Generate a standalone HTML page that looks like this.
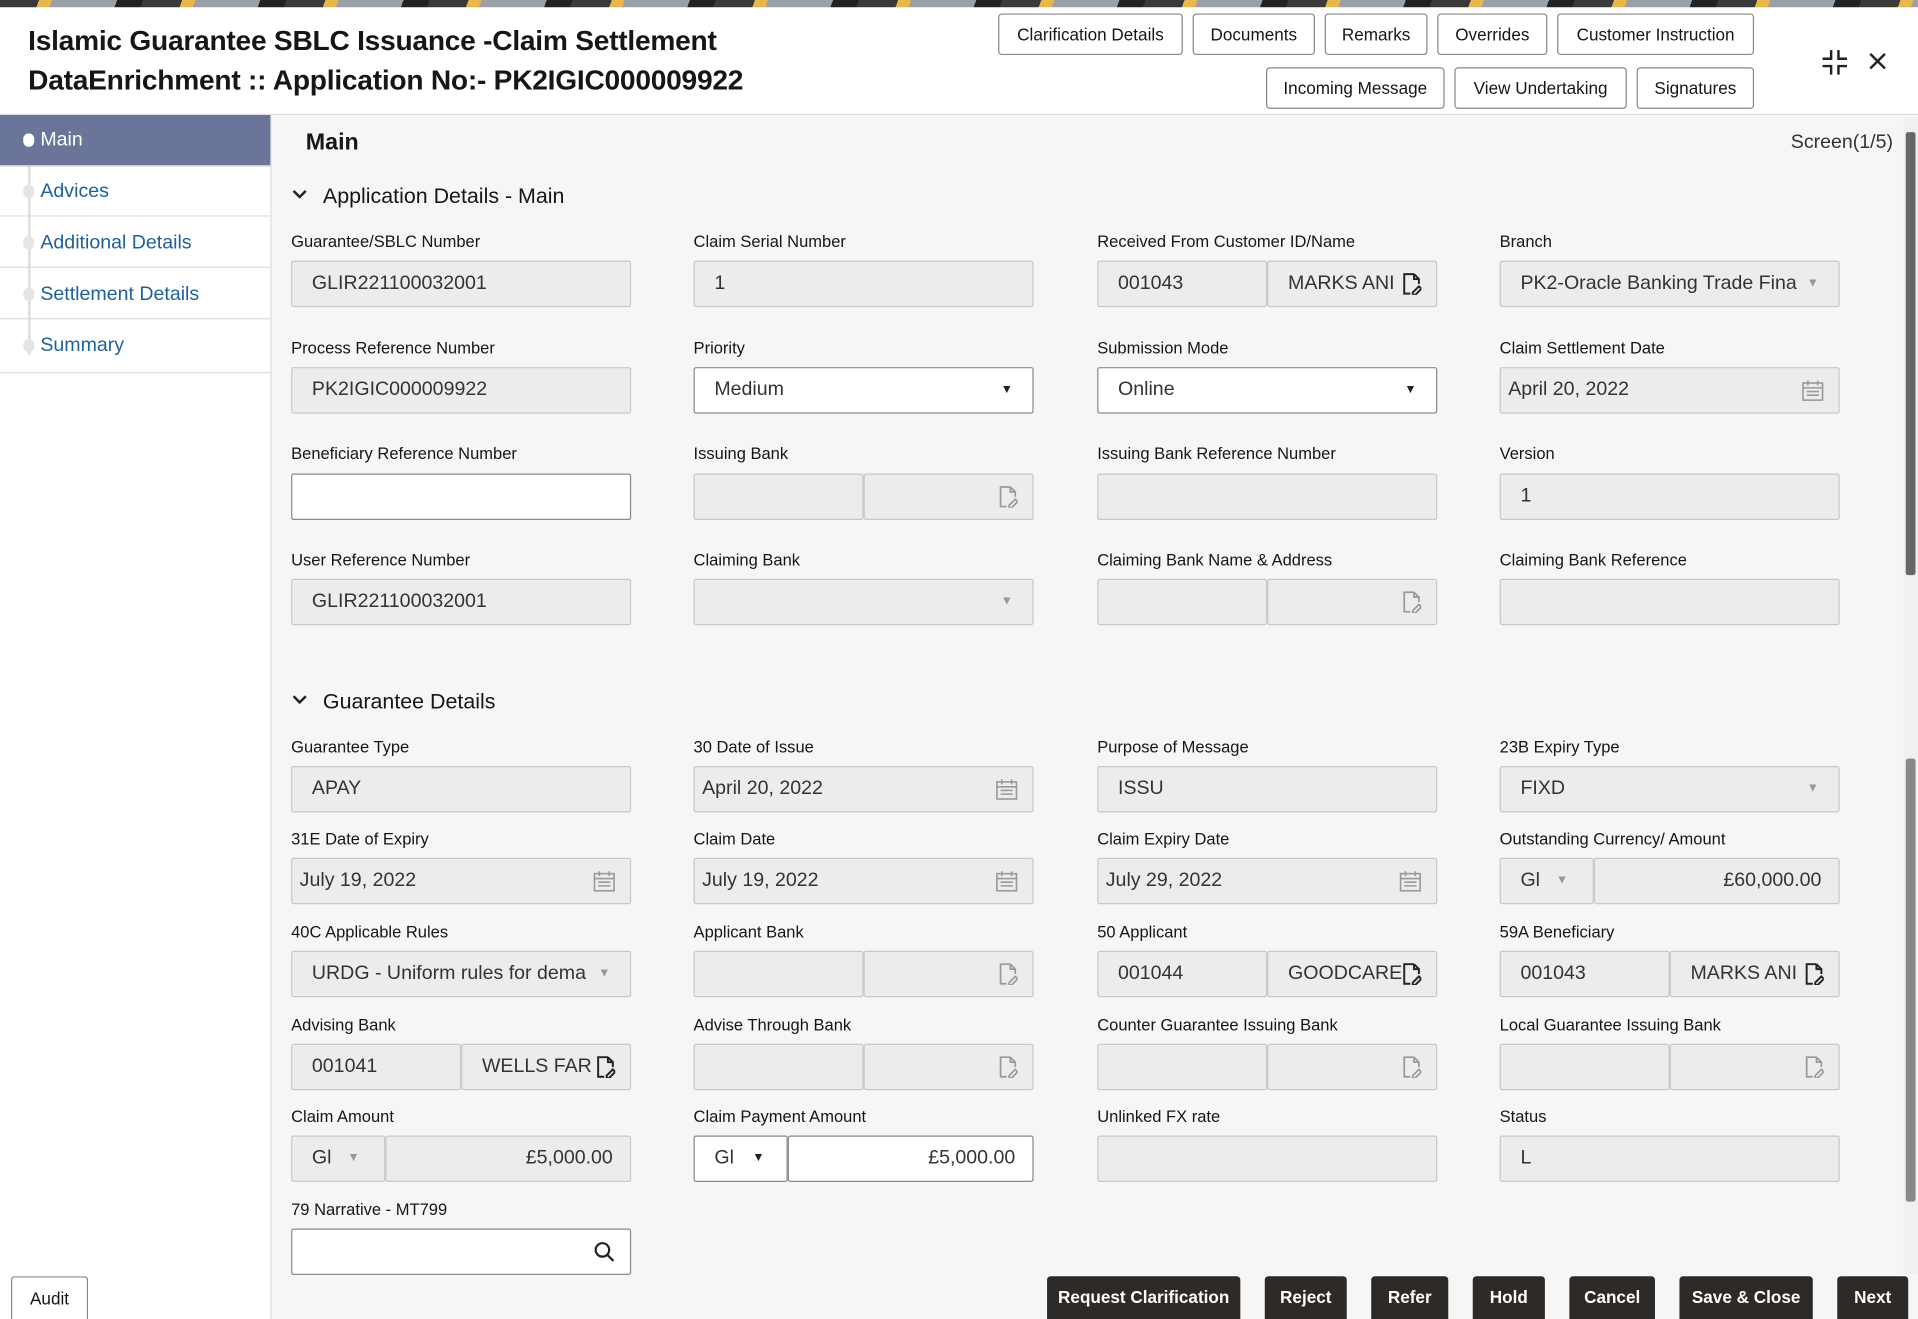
<!DOCTYPE html>
<html><head><meta charset="utf-8">
<style>
html,body{margin:0;padding:0;width:1918px;height:1319px;overflow:hidden;background:#fff;font-family:"Liberation Sans",sans-serif;}
#s{position:absolute;left:0;top:0;width:1568px;height:1078px;transform:scale(1.2232,1.2236);transform-origin:0 0;background:#f6f6f6;overflow:hidden}
.a{position:absolute}
.strip{left:0;top:0;width:1568px;height:6px;background:repeating-linear-gradient(110deg,#3a3a3a 0 30px,#e8b84a 30px 40px,#9aa0a8 40px 90px,#222 90px 110px)}
.hdr{left:0;top:6px;width:1568px;height:87px;background:#fff;border-bottom:1px solid #ddd}
.t{font-size:23px;font-weight:bold;color:#161616;letter-spacing:-0.2px}
.hb{position:absolute;height:34px;box-sizing:border-box;border:1px solid #888;border-radius:3px;background:#fff;font-size:14px;color:#161616;text-align:center;line-height:32px}
.side{left:0;top:94px;width:221px;height:984px;background:#fff;border-right:1px solid #ddd}
.si{position:absolute;left:0;width:221px;height:41px;border-bottom:1px solid #ddd;font-size:16px;color:#1f5f9a;line-height:41px;box-sizing:border-box;padding-left:33px}
.dot{position:absolute;left:19px;top:15px;width:9px;height:11px;border-radius:5px;background:#e5e5e5}
.l{position:absolute;font-size:13.5px;color:#161616;white-space:nowrap}
.f{position:absolute;height:38px;width:278px;box-sizing:border-box;border:1px solid #c8c8c8;background:#ececec;border-radius:2px;font-size:16px;padding-left:16px;line-height:36px;color:#333;white-space:nowrap;overflow:hidden}
.w{background:#fff;border-color:#8a8a8a}
.h{width:139px}
.c{position:absolute;right:16px;top:0;font-size:10px;color:#999}
.cd{color:#222}
.ic{position:absolute;right:12px;top:9px}
.sec{position:absolute;font-size:17.5px;color:#161616}
.btn{position:absolute;top:1043px;height:35px;background:#2e2a27;color:#fff;font-size:14px;font-weight:bold;text-align:center;line-height:35px;border-radius:3px 3px 0 0}
</style></head><body><div id="s">
<div class="a strip"></div>
<div class="a hdr"></div>
<div class="a t" style="left:23px;top:20px">Islamic Guarantee SBLC Issuance -Claim Settlement</div>
<div class="a t" style="left:23px;top:52px">DataEnrichment :: Application No:- PK2IGIC000009922</div>
<div class="hb" style="left:816px;top:11px;width:151px">Clarification Details</div>
<div class="hb" style="left:975px;top:11px;width:100px">Documents</div>
<div class="hb" style="left:1083px;top:11px;width:84px">Remarks</div>
<div class="hb" style="left:1175px;top:11px;width:90px">Overrides</div>
<div class="hb" style="left:1273px;top:11px;width:161px">Customer Instruction</div>
<div class="hb" style="left:1035px;top:55px;width:146px">Incoming Message</div>
<div class="hb" style="left:1189px;top:55px;width:141px">View Undertaking</div>
<div class="hb" style="left:1338px;top:55px;width:96px">Signatures</div>
<svg class="a" style="left:1489px;top:40px" width="22" height="22" viewBox="0 0 22 22" fill="none" stroke="#222" stroke-width="2"><path d="M8 1v7H1M14 1v7h7M8 21v-7H1M14 21v-7h7"/></svg>
<svg class="a" style="left:1527px;top:42px" width="16" height="16" viewBox="0 0 16 16" stroke="#222" stroke-width="2"><path d="M2 2l12 12M14 2L2 14"/></svg>

<div class="a side"></div>
<div class="a" style="left:23px;top:100px;width:2px;height:190px;background:#ddd"></div>
<div class="si" style="top:94px;background:#6b7599;color:#fff;height:42px"><span class="dot" style="background:#fff;top:15px"></span>Main</div>
<div class="si" style="top:136px"><span class="dot"></span>Advices</div>
<div class="si" style="top:178px"><span class="dot"></span>Additional Details</div>
<div class="si" style="top:220px"><span class="dot"></span>Settlement Details</div>
<div class="si" style="top:262px;height:43px"><span class="dot"></span>Summary</div>

<div class="a" style="left:250px;top:106px;font-size:19px;font-weight:bold;color:#161616">Main</div>
<div class="a" style="left:1464px;top:108px;font-size:16px;color:#333">Screen(1/5)</div>
<div class="a" style="left:1556px;top:96px;width:12px;height:945px;background:#f0f0f0"></div>
<div class="a" style="left:1558px;top:108px;width:8px;height:362px;background:#666;border-radius:2px"></div>
<div class="a" style="left:1558px;top:620px;width:8px;height:362px;background:#888;border-radius:2px"></div>

<svg class="a" style="left:238px;top:154px" width="14" height="10" viewBox="0 0 14 10" fill="none" stroke="#222" stroke-width="2"><path d="M2 2l5 5 5-5"/></svg>
<div class="sec" style="left:264px;top:150px">Application Details - Main</div>

<div class="l" style="left:238px;top:190px">Guarantee/SBLC Number</div>
<div class="l" style="left:567px;top:190px">Claim Serial Number</div>
<div class="l" style="left:897px;top:190px">Received From Customer ID/Name</div>
<div class="l" style="left:1226px;top:190px">Branch</div>
<div class="f" style="left:238px;top:213px">GLIR221100032001</div>
<div class="f" style="left:567px;top:213px">1</div>
<div class="f h" style="left:897px;top:213px">001043</div>
<div class="f h" style="left:1036px;top:213px">MARKS ANI<svg class="ic" width="16" height="18" viewBox="0 0 16 18" fill="none" stroke="#222" stroke-width="1.6"><path d="M10 1H2v16h5M10 1l4 4v4M10 1v4h4M9 16l5-5 2 2-5 5H9z"/></svg></div>
<div class="f" style="left:1226px;top:213px">PK2-Oracle Banking Trade Fina<span class="c">▼</span></div>

<div class="l" style="left:238px;top:277px">Process Reference Number</div>
<div class="l" style="left:567px;top:277px">Priority</div>
<div class="l" style="left:897px;top:277px">Submission Mode</div>
<div class="l" style="left:1226px;top:277px">Claim Settlement Date</div>
<div class="f" style="left:238px;top:300px">PK2IGIC000009922</div>
<div class="f w" style="left:567px;top:300px">Medium<span class="c cd">▼</span></div>
<div class="f w" style="left:897px;top:300px">Online<span class="c cd">▼</span></div>
<div class="f" style="left:1226px;top:300px;padding-left:6px">April 20, 2022<svg class="ic" width="18" height="18" viewBox="0 0 18 18" fill="none" stroke="#999" stroke-width="1.3"><rect x="1" y="3" width="16" height="14"/><path d="M1 7h16M5 1v4M13 1v4M4 10h10M4 13h10"/></svg></div>

<div class="l" style="left:238px;top:363px">Beneficiary Reference Number</div>
<div class="l" style="left:567px;top:363px">Issuing Bank</div>
<div class="l" style="left:897px;top:363px">Issuing Bank Reference Number</div>
<div class="l" style="left:1226px;top:363px">Version</div>
<div class="f w" style="left:238px;top:387px"></div>
<div class="f h" style="left:567px;top:387px"></div>
<div class="f h" style="left:706px;top:387px"><svg class="ic" width="16" height="18" viewBox="0 0 16 18" fill="none" stroke="#999" stroke-width="1.4"><path d="M10 1H2v16h5M10 1l4 4v4M10 1v4h4M9 16l5-5 2 2-5 5H9z"/></svg></div>
<div class="f" style="left:897px;top:387px"></div>
<div class="f" style="left:1226px;top:387px">1</div>

<div class="l" style="left:238px;top:450px">User Reference Number</div>
<div class="l" style="left:567px;top:450px">Claiming Bank</div>
<div class="l" style="left:897px;top:450px">Claiming Bank Name &amp; Address</div>
<div class="l" style="left:1226px;top:450px">Claiming Bank Reference</div>
<div class="f" style="left:238px;top:473px">GLIR221100032001</div>
<div class="f" style="left:567px;top:473px"><span class="c">▼</span></div>
<div class="f h" style="left:897px;top:473px"></div>
<div class="f h" style="left:1036px;top:473px"><svg class="ic" width="16" height="18" viewBox="0 0 16 18" fill="none" stroke="#999" stroke-width="1.4"><path d="M10 1H2v16h5M10 1l4 4v4M10 1v4h4M9 16l5-5 2 2-5 5H9z"/></svg></div>
<div class="f" style="left:1226px;top:473px"></div>

<svg class="a" style="left:238px;top:567px" width="14" height="10" viewBox="0 0 14 10" fill="none" stroke="#222" stroke-width="2"><path d="M2 2l5 5 5-5"/></svg>
<div class="sec" style="left:264px;top:563px">Guarantee Details</div>

<div class="l" style="left:238px;top:603px">Guarantee Type</div>
<div class="l" style="left:567px;top:603px">30 Date of Issue</div>
<div class="l" style="left:897px;top:603px">Purpose of Message</div>
<div class="l" style="left:1226px;top:603px">23B Expiry Type</div>
<div class="f" style="left:238px;top:626px">APAY</div>
<div class="f" style="left:567px;top:626px;padding-left:6px">April 20, 2022<svg class="ic" width="18" height="18" viewBox="0 0 18 18" fill="none" stroke="#999" stroke-width="1.3"><rect x="1" y="3" width="16" height="14"/><path d="M1 7h16M5 1v4M13 1v4M4 10h10M4 13h10"/></svg></div>
<div class="f" style="left:897px;top:626px">ISSU</div>
<div class="f" style="left:1226px;top:626px">FIXD<span class="c">▼</span></div>

<div class="l" style="left:238px;top:678px">31E Date of Expiry</div>
<div class="l" style="left:567px;top:678px">Claim Date</div>
<div class="l" style="left:897px;top:678px">Claim Expiry Date</div>
<div class="l" style="left:1226px;top:678px">Outstanding Currency/ Amount</div>
<div class="f" style="left:238px;top:701px;padding-left:6px">July 19, 2022<svg class="ic" width="18" height="18" viewBox="0 0 18 18" fill="none" stroke="#999" stroke-width="1.3"><rect x="1" y="3" width="16" height="14"/><path d="M1 7h16M5 1v4M13 1v4M4 10h10M4 13h10"/></svg></div>
<div class="f" style="left:567px;top:701px;padding-left:6px">July 19, 2022<svg class="ic" width="18" height="18" viewBox="0 0 18 18" fill="none" stroke="#999" stroke-width="1.3"><rect x="1" y="3" width="16" height="14"/><path d="M1 7h16M5 1v4M13 1v4M4 10h10M4 13h10"/></svg></div>
<div class="f" style="left:897px;top:701px;padding-left:6px">July 29, 2022<svg class="ic" width="18" height="18" viewBox="0 0 18 18" fill="none" stroke="#999" stroke-width="1.3"><rect x="1" y="3" width="16" height="14"/><path d="M1 7h16M5 1v4M13 1v4M4 10h10M4 13h10"/></svg></div>
<div class="f" style="left:1226px;top:701px;width:77px">Gl<span class="c" style="right:20px">▼</span></div>
<div class="f" style="left:1303px;top:701px;width:201px;text-align:right;padding-right:14px">£60,000.00</div>

<div class="l" style="left:238px;top:754px">40C Applicable Rules</div>
<div class="l" style="left:567px;top:754px">Applicant Bank</div>
<div class="l" style="left:897px;top:754px">50 Applicant</div>
<div class="l" style="left:1226px;top:754px">59A Beneficiary</div>
<div class="f" style="left:238px;top:777px">URDG - Uniform rules for dema<span class="c" style="background:#ececec;padding-left:6px">▼</span></div>
<div class="f h" style="left:567px;top:777px"></div>
<div class="f h" style="left:706px;top:777px"><svg class="ic" width="16" height="18" viewBox="0 0 16 18" fill="none" stroke="#999" stroke-width="1.4"><path d="M10 1H2v16h5M10 1l4 4v4M10 1v4h4M9 16l5-5 2 2-5 5H9z"/></svg></div>
<div class="f h" style="left:897px;top:777px">001044</div>
<div class="f h" style="left:1036px;top:777px">GOODCARE<svg class="ic" width="16" height="18" viewBox="0 0 16 18" fill="none" stroke="#222" stroke-width="1.6" style="background:#ececec"><path d="M10 1H2v16h5M10 1l4 4v4M10 1v4h4M9 16l5-5 2 2-5 5H9z"/></svg></div>
<div class="f h" style="left:1226px;top:777px">001043</div>
<div class="f h" style="left:1365px;top:777px">MARKS ANI<svg class="ic" width="16" height="18" viewBox="0 0 16 18" fill="none" stroke="#222" stroke-width="1.6"><path d="M10 1H2v16h5M10 1l4 4v4M10 1v4h4M9 16l5-5 2 2-5 5H9z"/></svg></div>

<div class="l" style="left:238px;top:830px">Advising Bank</div>
<div class="l" style="left:567px;top:830px">Advise Through Bank</div>
<div class="l" style="left:897px;top:830px">Counter Guarantee Issuing Bank</div>
<div class="l" style="left:1226px;top:830px">Local Guarantee Issuing Bank</div>
<div class="f h" style="left:238px;top:853px">001041</div>
<div class="f h" style="left:377px;top:853px">WELLS FAR<svg class="ic" width="16" height="18" viewBox="0 0 16 18" fill="none" stroke="#222" stroke-width="1.6"><path d="M10 1H2v16h5M10 1l4 4v4M10 1v4h4M9 16l5-5 2 2-5 5H9z"/></svg></div>
<div class="f h" style="left:567px;top:853px"></div>
<div class="f h" style="left:706px;top:853px"><svg class="ic" width="16" height="18" viewBox="0 0 16 18" fill="none" stroke="#999" stroke-width="1.4"><path d="M10 1H2v16h5M10 1l4 4v4M10 1v4h4M9 16l5-5 2 2-5 5H9z"/></svg></div>
<div class="f h" style="left:897px;top:853px"></div>
<div class="f h" style="left:1036px;top:853px"><svg class="ic" width="16" height="18" viewBox="0 0 16 18" fill="none" stroke="#999" stroke-width="1.4"><path d="M10 1H2v16h5M10 1l4 4v4M10 1v4h4M9 16l5-5 2 2-5 5H9z"/></svg></div>
<div class="f h" style="left:1226px;top:853px"></div>
<div class="f h" style="left:1365px;top:853px"><svg class="ic" width="16" height="18" viewBox="0 0 16 18" fill="none" stroke="#999" stroke-width="1.4"><path d="M10 1H2v16h5M10 1l4 4v4M10 1v4h4M9 16l5-5 2 2-5 5H9z"/></svg></div>

<div class="l" style="left:238px;top:905px">Claim Amount</div>
<div class="l" style="left:567px;top:905px">Claim Payment Amount</div>
<div class="l" style="left:897px;top:905px">Unlinked FX rate</div>
<div class="l" style="left:1226px;top:905px">Status</div>
<div class="f" style="left:238px;top:928px;width:77px">Gl<span class="c" style="right:20px">▼</span></div>
<div class="f" style="left:315px;top:928px;width:201px;text-align:right;padding-right:14px">£5,000.00</div>
<div class="f w" style="left:567px;top:928px;width:77px">Gl<span class="c cd" style="right:18px">▼</span></div>
<div class="f w" style="left:644px;top:928px;width:201px;text-align:right;padding-right:14px">£5,000.00</div>
<div class="f" style="left:897px;top:928px"></div>
<div class="f" style="left:1226px;top:928px">L</div>

<div class="l" style="left:238px;top:981px">79 Narrative - MT799</div>
<div class="f w" style="left:238px;top:1004px"><svg class="ic" width="18" height="18" viewBox="0 0 18 18" fill="none" stroke="#222" stroke-width="1.8"><circle cx="7.5" cy="7.5" r="5.5"/><path d="M11.5 11.5l5 5"/></svg></div>

<div class="a" style="left:9px;top:1043px;width:63px;height:35px;box-sizing:border-box;border:1px solid #888;border-bottom:none;border-radius:3px 3px 0 0;background:#fff;font-size:14px;text-align:center;line-height:35px;color:#161616">Audit</div>
<div class="btn" style="left:856px;width:158px">Request Clarification</div>
<div class="btn" style="left:1034px;width:67px">Reject</div>
<div class="btn" style="left:1121px;width:63px">Refer</div>
<div class="btn" style="left:1204px;width:59px">Hold</div>
<div class="btn" style="left:1283px;width:70px">Cancel</div>
<div class="btn" style="left:1373px;width:109px">Save &amp; Close</div>
<div class="btn" style="left:1502px;width:58px">Next</div>
</div></body></html>
